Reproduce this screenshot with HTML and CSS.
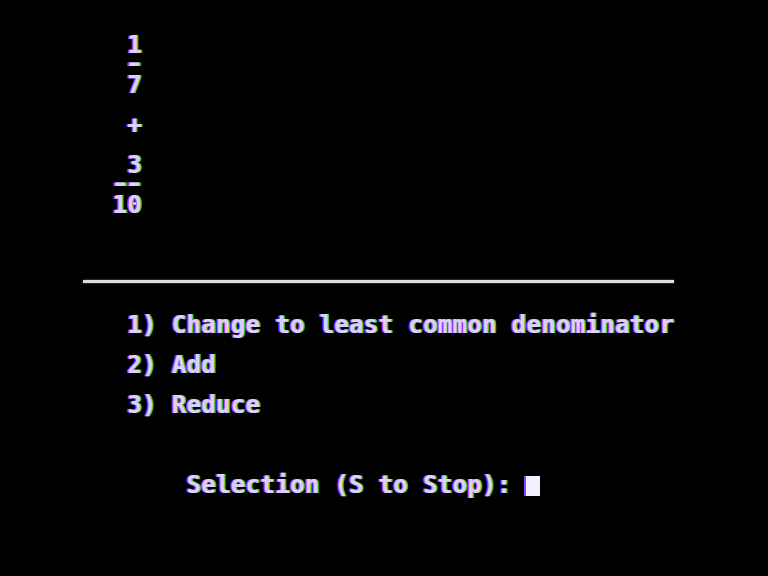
FILE: index.html
```html
<!DOCTYPE html>
<html>
<head>
<meta charset="utf-8">
<link rel="stylesheet" href="styles.css">
</head>
<body>
<div class="screen">
  <div class="row"></div>
  <div class="row">   1</div>
  <div class="row">   <span class="dash">-</span></div>
  <div class="row">   7</div>
  <div class="row"></div>
  <div class="row">   +</div>
  <div class="row"></div>
  <div class="row">   3</div>
  <div class="row">  <span class="dash">-</span><span class="dash">-</span></div>
  <div class="row">  10</div>
  <div class="row"></div>
  <div class="row"></div>
  <div class="row"></div>
  <div class="row"><div class="rule"></div></div>
  <div class="row"></div>
  <div class="row">   1) Change to least common denominator</div>
  <div class="row"></div>
  <div class="row">   2) Add</div>
  <div class="row"></div>
  <div class="row">   3) Reduce</div>
  <div class="row"></div>
  <div class="row"></div>
  <div class="row"></div>
  <div class="row">       Selection (S to Stop): <span class="cursor"></span></div>
</div>
</body>
</html>
```
FILE: styles.css
```css
html, body {
  margin: 0;
  padding: 0;
  background: #000;
  width: 768px;
  height: 576px;
  overflow: hidden;
}
.screen {
  width: 591px;
  margin-left: 83px;
  padding-top: 15px;
  display: flex;
  flex-direction: column;
  font-family: "DejaVu Sans Mono", "Liberation Mono", monospace;
  font-weight: bold;
  font-size: 24px;
  letter-spacing: 0.33px;
  color: #ddd0ff;
  text-shadow: -1.5px 0 #a838ff, 1.5px 0 #3cc82c;
}
.row {
  height: 20px;
  line-height: 20px;
  white-space: pre;
}
.dash {
  display: inline-block;
  transform: translateY(-2px) scaleX(1.3);
}
.rule {
  margin-top: 5px;
  height: 3px;
  background: #dcdcdc;
  box-shadow: 0 0 2px #888;
}
.cursor {
  display: inline-block;
  width: 14px;
  height: 20px;
  vertical-align: top;
  margin-top: 1px;
  background: #f4f0ff;
  box-shadow: -2px 0 0 #9040ff;
}
```
